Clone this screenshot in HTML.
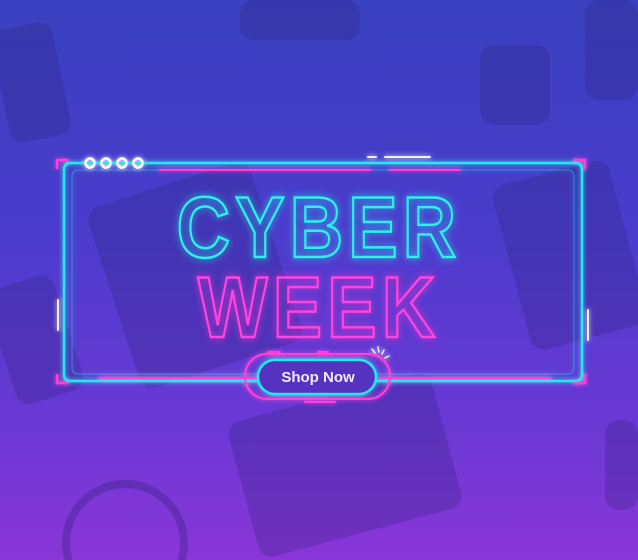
<!DOCTYPE html>
<html style="width:638px;height:560px;overflow:hidden"><head><style>
body{margin:0;width:638px;height:560px;overflow:hidden;position:relative;font-family:"Liberation Sans",sans-serif}
.wrap{position:absolute;left:0;top:0;width:638px;height:560px;overflow:hidden}
.bg{position:absolute;inset:0;background:linear-gradient(180deg,#3a40c0 0%,#4a3ccc 40%,#6a38d4 75%,#8a36d8 100%)}
.obj{position:absolute;background:rgba(40,30,110,.25);border-radius:14px}
.t{position:absolute;left:0;width:638px;text-align:center;font-weight:bold;color:transparent;letter-spacing:6px;transform:scaleX(.86)}
</style></head><body><div class="wrap">
<div class="bg"></div>
<div class="obj" style="left:0;top:25px;width:62px;height:115px;transform:rotate(-12deg)"></div>
<div class="obj" style="left:240px;top:0;width:120px;height:40px"></div>
<div class="obj" style="left:480px;top:45px;width:70px;height:80px"></div>
<div class="obj" style="left:585px;top:0;width:53px;height:100px"></div>
<div class="obj" style="left:110px;top:180px;width:170px;height:190px;transform:rotate(-18deg)"></div>
<div class="obj" style="left:510px;top:170px;width:120px;height:170px;transform:rotate(-15deg)"></div>
<div class="obj" style="left:0;top:280px;width:70px;height:120px;transform:rotate(-18deg)"></div>
<div class="obj" style="left:240px;top:395px;width:210px;height:140px;transform:rotate(-15deg)"></div>
<div class="obj" style="left:605px;top:420px;width:33px;height:90px"></div>
<svg width="638" height="560" style="position:absolute;left:0;top:0">
<circle cx="125" cy="543" r="59" fill="none" stroke="rgba(40,30,110,.3)" stroke-width="8"/>
<defs><filter id="g"><feGaussianBlur stdDeviation="2.5" result="b"/><feMerge><feMergeNode in="b"/><feMergeNode in="SourceGraphic"/></feMerge></filter></defs>
<g filter="url(#g)" fill="none" stroke-linecap="round">
<rect x="64" y="163" width="518" height="218" rx="6" stroke="#27e6f0" stroke-width="2.5"/>
<rect x="72" y="170" width="502" height="204" rx="6" stroke="#2ad0f0" stroke-width="1" opacity=".5"/>
<path d="M57 168v-8h10M575 160h10v8M57 375v8h10M585 375v8h-10" stroke="#ff3fd8" stroke-width="2.5"/>
<path d="M160 170h210M390 170h70" stroke="#ff3fd8" stroke-width="2"/>
<path d="M368 157h8M385 157h45" stroke="#eee" stroke-width="2"/>
<path d="M100 378h160M380 378h170" stroke="#ff3fd8" stroke-width="2"/>
<path d="M58 300v30M588 310v30" stroke="#eee" stroke-width="2"/>
<rect x="245" y="354" width="145" height="45" rx="22" stroke="#ff3fd8" stroke-width="2"/>
<rect x="258" y="360" width="118" height="34" rx="17" stroke="#27e6f0" stroke-width="2.5" fill="#5530c0"/>
<path d="M305 402h30M268 352h12M318 352h10" stroke="#ff3fd8" stroke-width="2"/>
<path d="M372 349l3 4M378 347l1 5M384 350l-2 4M389 356l-4 2" stroke="#eee" stroke-width="1.5"/>
<g stroke="#fff" stroke-width="2.5"><circle cx="90" cy="163" r="4.5"/><circle cx="106" cy="163" r="4.5"/><circle cx="122" cy="163" r="4.5"/><circle cx="138" cy="163" r="4.5"/></g>
</g>
</svg>
<div class="t" style="top:178px;font-size:86px;line-height:100px;-webkit-text-stroke:2.5px #2ff0e8;filter:drop-shadow(0 0 4px #20e0f0)">CYBER</div>
<div class="t" style="top:258px;font-size:86px;line-height:100px;-webkit-text-stroke:2.5px #ff45e0;filter:drop-shadow(0 0 4px #ff30d0)">WEEK</div>
<div style="position:absolute;left:258px;top:369px;width:120px;text-align:center;color:#f2e8ff;font-size:15px;font-weight:bold">Shop Now</div>
</div></body></html>
